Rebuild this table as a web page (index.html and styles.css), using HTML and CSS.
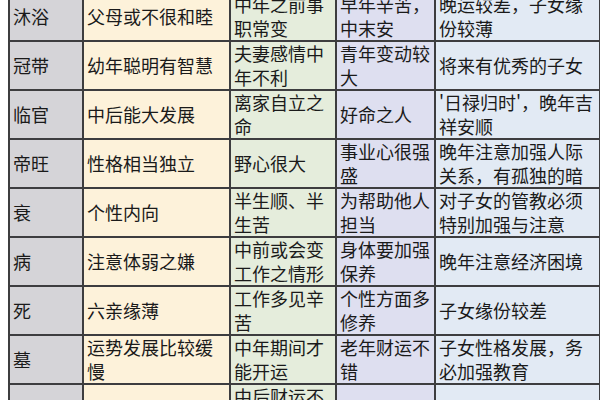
FILE: index.html
```html
<!DOCTYPE html>
<html lang="zh">
<head>
<meta charset="utf-8">
<link rel="stylesheet" href="styles.css">
</head>
<body>
<table class="chart">
  <colgroup>
    <col class="c1"><col class="c2"><col class="c3"><col class="c4"><col class="c5">
  </colgroup>
  <tbody>
    <tr><td class="k">沐浴</td><td class="a">父母或不很和睦</td><td class="b">中年之前事职常变</td><td class="c">早年辛苦，中末安</td><td class="d">晚运较差，子女缘份较薄</td></tr>
    <tr><td class="k">冠带</td><td class="a">幼年聪明有智慧</td><td class="b">夫妻感情中年不利</td><td class="c">青年变动较大</td><td class="d">将来有优秀的子女</td></tr>
    <tr><td class="k">临官</td><td class="a">中后能大发展</td><td class="b">离家自立之命</td><td class="c">好命之人</td><td class="d">'日禄归时'，晚年吉祥安顺</td></tr>
    <tr><td class="k">帝旺</td><td class="a">性格相当独立</td><td class="b">野心很大</td><td class="c">事业心很强盛</td><td class="d">晚年注意加强人际关系，有孤独的暗</td></tr>
    <tr><td class="k">衰</td><td class="a">个性内向</td><td class="b">半生顺、半生苦</td><td class="c">为帮助他人担当</td><td class="d">对子女的管教必须特别加强与注意</td></tr>
    <tr><td class="k">病</td><td class="a">注意体弱之嫌</td><td class="b">中前或会变工作之情形</td><td class="c">身体要加强保养</td><td class="d">晚年注意经济困境</td></tr>
    <tr><td class="k">死</td><td class="a">六亲缘薄</td><td class="b">工作多见辛苦</td><td class="c">个性方面多修养</td><td class="d">子女缘份较差</td></tr>
    <tr><td class="k">墓</td><td class="a">运势发展比较缓慢</td><td class="b">中年期间才能开运</td><td class="c">老年财运不错</td><td class="d">子女性格发展，务必加强教育</td></tr>
    <tr><td class="k">绝</td><td class="a">性格容易冲动</td><td class="b">中后财运不佳</td><td class="c">晚年孤独</td><td class="d">子女个性比较内向</td></tr>
  </tbody>
</table>
</body>
</html>
```

FILE: styles.css
```css
html, body {
  margin: 0;
  padding: 0;
  background: #ffffff;
  overflow: hidden;
}

.chart {
  margin: -9px 0 0 8px;
  width: 591px;
  table-layout: fixed;
  border-collapse: collapse;
  font-family: "Noto Sans CJK SC", "Noto Sans", sans-serif;
  font-size: 18px;
  line-height: 23.5px;
  color: #1a1a1a;
}

.c1 { width: 74px; }
.c2 { width: 147px; }
.c3 { width: 106px; }
.c4 { width: 99px; }
.c5 { width: 165px; }

.chart td {
  border: 2px solid #3d3d3f;
  height: 47px;
  padding: 0 3px 0 3px;
  vertical-align: middle;
  text-align: left;
  word-break: break-all;
}

.chart td.k { background: #d5d4d8; }
.chart td.a { background: #fdf2da; }
.chart td.b { background: #e5eddc; }
.chart td.c { background: #dedff0; }
.chart td.d { background: #e2eaf4; }
```
